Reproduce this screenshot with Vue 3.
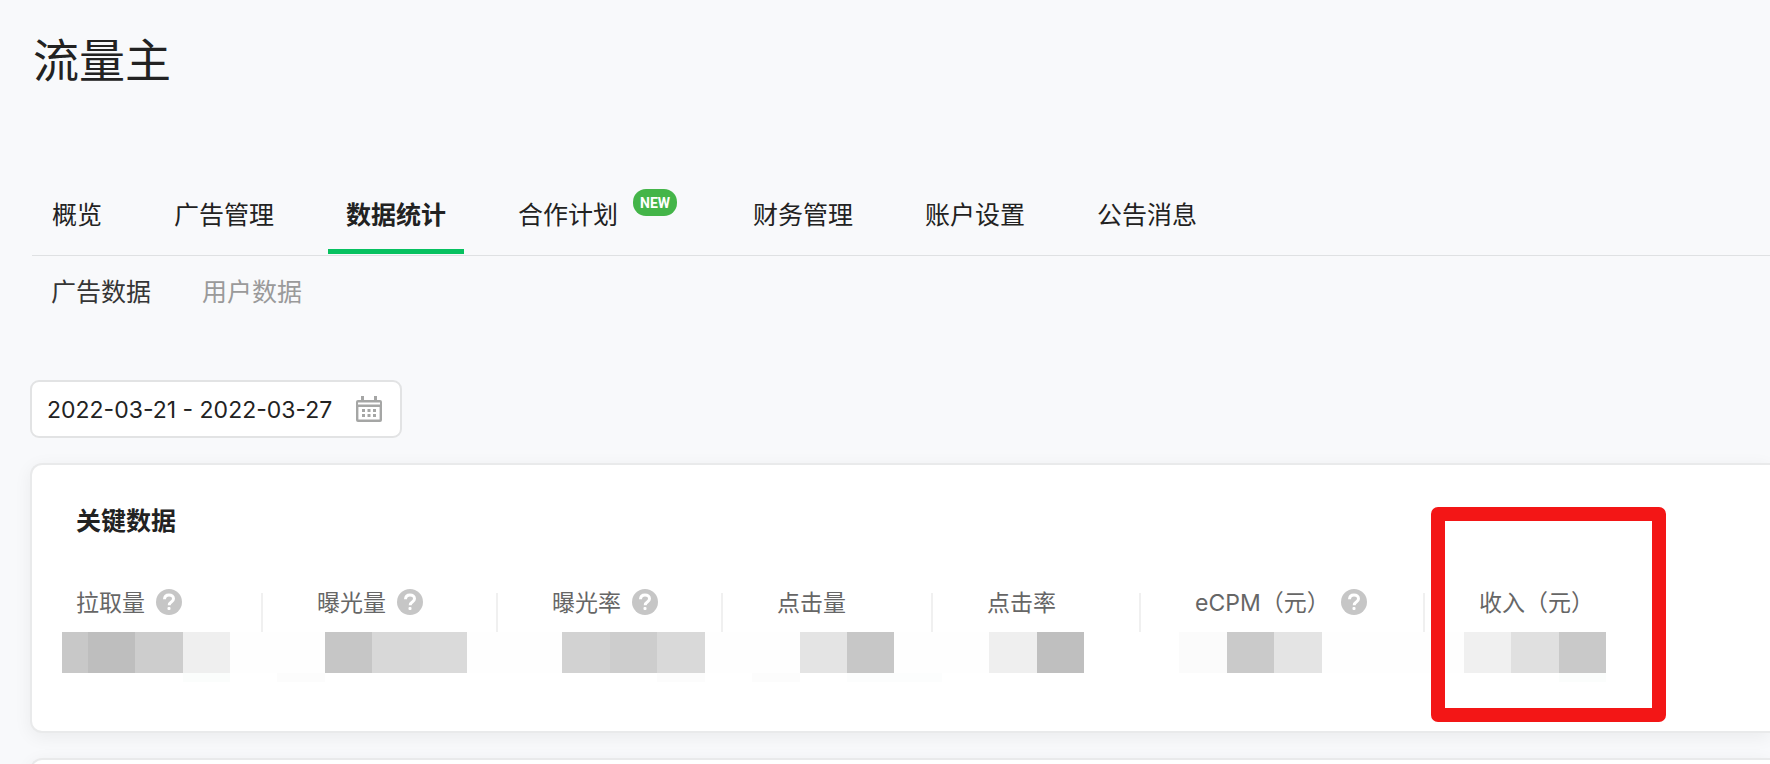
<script setup>
import { computed, ref } from 'vue';

let activeTab = ref('stats');
let activeSubTab = ref('ad');
let dateRange = ref('2022-03-21 - 2022-03-27');

let tabs = [
    { id: 'overview', name: '概览' },
    { id: 'ads', name: '广告管理' },
    { id: 'stats', name: '数据统计' },
    { id: 'plan', name: '合作计划', badge: 'NEW' },
    { id: 'finance', name: '财务管理' },
    { id: 'account', name: '账户设置' },
    { id: 'notice', name: '公告消息' },
];

let subTabs = [
    { id: 'ad', name: '广告数据' },
    { id: 'user', name: '用户数据' },
];

// size is the share of the row that the column takes
let metrics = [
    { name: '拉取量', size: 187, help: true },
    { name: '曝光量', size: 235, help: true },
    { name: '曝光率', size: 225, help: true },
    { name: '点击量', size: 210 },
    { name: '点击率', size: 208 },
    { name: 'eCPM（元）', size: 284, help: true },
    { name: '收入（元）', size: 345, marked: true },
];

// masked values, as [share of the row, colour]
let mask = [
    [26, '#c8c8c8'], [47, '#bebebe'], [48, '#cdcdcd'], [47, '#efefef'], [95, '#fefefe'],
    [47, '#c6c6c6'], [48, '#d8d8d8'], [47, '#dadada'], [95, '#fefefe'],
    [48, '#d2d2d2'], [47, '#cdcdcd'], [48, '#d9d9d9'], [95, '#fefefe'],
    [47, '#e4e4e4'], [47, '#c7c7c7'], [95, '#fefefe'],
    [48, '#efefef'], [47, '#bfbfbf'], [95, '#ffffff'],
    [48, '#fbfbfb'], [47, '#cacaca'], [48, '#e4e4e4'], [142, '#fefefe'],
    [47, '#f0f0f0'], [48, '#e0e0e0'], [47, '#c9c9c9'], [164, '#ffffff'],
];

let maskEdge = [
    [121, '#ffffff'], [47, '#fbfdfc'], [47, '#ffffff'], [48, '#fcfcfc'], [332, '#ffffff'],
    [48, '#fcfcfc'], [47, '#ffffff'], [48, '#fcfcfc'], [47, '#ffffff'], [95, '#fcfdfd'],
    [617, '#ffffff'], [47, '#fbfdfc'], [164, '#ffffff'],
];

let columns = computed(() => metrics.map(m => `minmax(0, ${m.size}fr)`).join(' '));
</script>

<template>
    <div class="page">
        <h1 class="page-title">流量主</h1>

        <nav class="tabs">
            <a
                v-for="tab in tabs"
                :key="tab.id"
                href="#"
                class="tab"
                :class="{ active: tab.id === activeTab, 'has-badge': tab.badge }"
                @click.prevent="activeTab = tab.id"
            >
                <span>{{ tab.name }}</span>
                <span v-if="tab.badge" class="badge">{{ tab.badge }}</span>
            </a>
        </nav>

        <nav class="sub-tabs">
            <a
                v-for="tab in subTabs"
                :key="tab.id"
                href="#"
                class="sub-tab"
                :class="{ active: tab.id === activeSubTab }"
                @click.prevent="activeSubTab = tab.id"
            >{{ tab.name }}</a>
        </nav>

        <div class="date-picker">
            <input v-model="dateRange" class="date-input" type="text" aria-label="日期范围" readonly />
            <button class="date-button" type="button" aria-label="选择日期">
                <svg width="26" height="26" viewBox="0 0 26 26">
                    <g fill="#a5a6a5">
                        <path d="M5 0h3v4H5zM18 0h3v4h-3z" />
                        <path fill-rule="evenodd" d="M2 4h22a2 2 0 0 1 2 2v18a2 2 0 0 1-2 2H2a2 2 0 0 1-2-2V6a2 2 0 0 1 2-2zM2 6.6v2h22v-2zM2.4 11v12.6h21.2V11z" />
                        <path d="M6 13h3v3H6zM11.5 13h3v3h-3zM17 13h3v3h-3zM6 18h3v3H6zM11.5 18h3v3h-3zM17 18h3v3h-3z" />
                    </g>
                </svg>
            </button>
        </div>

        <section class="card">
            <h2 class="card-title">关键数据</h2>
            <div class="metrics" :style="{ gridTemplateColumns: columns }">
                <div v-for="metric in metrics" :key="metric.name" class="metric">
                    <span class="metric-name">{{ metric.name }}</span>
                    <button v-if="metric.help" class="help" type="button" :aria-label="metric.name + '说明'">
                        <svg width="26" height="26" viewBox="0 0 26 26">
                            <circle cx="13" cy="13" r="13" fill="#c6c6c6" />
                            <path d="M8.5 10.2C8.6 7.5 10.4 6 13 6s4.5 1.5 4.5 3.7c0 1.6-.9 2.4-2.2 3.3-1.4.9-2.1 1.6-2.1 3.2" fill="none" stroke="#fff" stroke-width="3" />
                            <rect x="11.5" y="18" width="3" height="3" rx="1" fill="#fff" />
                        </svg>
                    </button>
                    <div v-if="metric.marked" class="marker"></div>
                </div>
            </div>
            <div class="mask">
                <span v-for="(block, i) in mask" :key="i" :style="{ flexGrow: block[0], backgroundColor: block[1] }"></span>
            </div>
            <div class="mask mask-edge">
                <span v-for="(block, i) in maskEdge" :key="i" :style="{ flexGrow: block[0], backgroundColor: block[1] }"></span>
            </div>
        </section>

        <section class="card"></section>
    </div>
</template>

<style>
body {
    background-color: #f8f9fb;
}
</style>

<style scoped>
.page {
    box-sizing: border-box;
    height: 100vh;
    padding: 30px 0 0 30px;
    overflow: hidden;
    background-color: #f8f9fb;
    color: #222;
    font-family: Inter, 'Noto Sans CJK SC', sans-serif;
    font-size: 25px;
    line-height: 36px;
}

.page-title {
    margin: 0 0 107px 3px;
    font-size: 46px;
    font-weight: 400;
    line-height: 60px;
}

.tabs {
    display: flex;
    gap: 36px;
    margin-left: 2px;
    border-bottom: 1px solid #dfe1e3;
    padding: 0 0 1px 2px;
}

.tab {
    display: flex;
    gap: 15px;
    padding: 0 18px 16px;
    border-bottom: 5px solid transparent;
    color: #222;
    text-decoration: none;
    white-space: nowrap;
}

.tab.active {
    border-bottom-color: #07c160;
    font-weight: 600;
}

.tab.has-badge {
    padding-right: 22px;
}

.badge {
    width: 44px;
    height: 27px;
    margin-top: -8px;
    border-radius: 13px;
    background-color: #44b549;
    color: #fff;
    font-family: Roboto, sans-serif;
    font-size: 14px;
    font-weight: 700;
    line-height: 28px;
    text-align: center;
}

.sub-tabs {
    display: flex;
    gap: 51px;
    margin-top: 18px;
    padding-left: 21px;
}

.sub-tab {
    color: #9a9a9a;
    text-decoration: none;
}

.sub-tab.active {
    color: #353535;
}

.date-picker {
    box-sizing: border-box;
    display: flex;
    align-items: center;
    width: 372px;
    height: 58px;
    margin-top: 70px;
    padding: 0 18px 0 15px;
    border: 2px solid #e2e3e4;
    border-radius: 9px;
    background-color: #fff;
}

.date-input {
    flex: 1;
    min-width: 0;
    padding: 2px 0 0;
    border: none;
    outline: none;
    background: none;
    color: #222;
    font: inherit;
    font-size: 23px;
}

.date-button,
.help {
    display: block;
    flex: none;
    width: 26px;
    height: 26px;
    padding: 0;
    border: none;
    background: none;
    cursor: pointer;
}

.date-button svg,
.help svg {
    display: block;
}

.card {
    margin-top: 25px;
    padding: 38px 0 49px;
    border: 2px solid #e9eaeb;
    border-right: none;
    border-radius: 12px 0 0 12px;
    background-color: #fff;
    box-shadow: 0 4px 18px rgba(0, 0, 0, 0.06);
}

.card-title {
    margin: 0 0 50px 44px;
    font-size: 25px;
    font-weight: 600;
    line-height: 36px;
}

.metrics {
    display: grid;
    height: 43px;
    margin-left: 44px;
}

.metric {
    position: relative;
    display: flex;
    gap: 11px;
    align-items: flex-start;
    color: #666;
    font-size: 23px;
    line-height: 28px;
    white-space: nowrap;
}

.metric:not(:first-child) {
    padding-left: 54px;
}

.metric:not(:last-child)::after {
    content: '';
    width: 2px;
    height: 39px;
    margin: 4px 0 0 auto;
    background-color: #f0f0f0;
}

.marker {
    position: absolute;
    top: -82px;
    left: 6px;
    box-sizing: border-box;
    width: 235px;
    height: 215px;
    border: 14px solid #f31616;
    border-radius: 7px;
}

.mask {
    display: flex;
    height: 41px;
    margin-left: 30px;
}

.mask span {
    flex-basis: 0;
}

.mask-edge {
    height: 9px;
}
</style>
